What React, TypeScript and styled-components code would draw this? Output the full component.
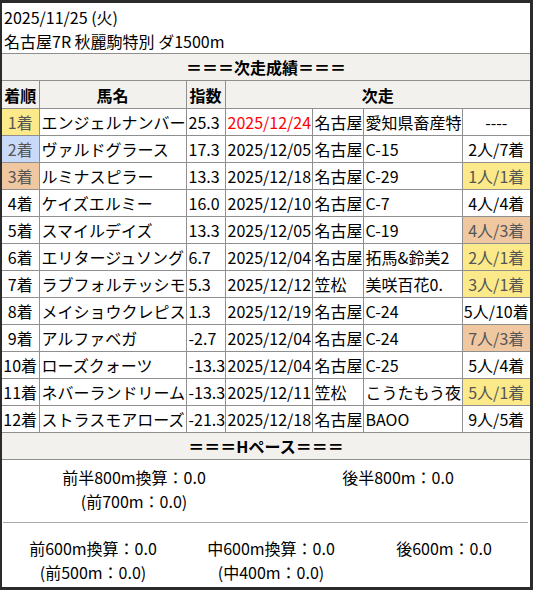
import React from 'react';
import styled, { createGlobalStyle, css } from 'styled-components';

const GlobalStyle = createGlobalStyle`
  html, body { margin: 0; padding: 0; background: #fff; }
  body { font-family: "Noto Sans CJK JP", "Noto Sans", sans-serif; color: #000; }
`;

const line = '#8f8f8f';

type Tone = 'gold' | 'silver' | 'bronze' | undefined;

const toneBg: Record<string, string> = {
  gold: '#fbe98a',
  silver: '#c9daf8',
  bronze: '#efc8a2',
};

const Frame = styled.div`
  box-sizing: border-box;
  width: 533px;
  height: 590px;
  border: 3px solid #2b2b2b;
  border-left-width: 2px;
  background: #fff;
  font-size: 16px;
  display: flex;
  flex-direction: column;
`;

const Header = styled.div`
  padding: 2px 2px 0;
  line-height: 24px;
`;

const Band = styled.div`
  height: 26px;
  line-height: 26px;
  border-top: 1px solid ${line};
  border-bottom: 1px solid ${line};
  background: #f2f1ed;
  font-weight: bold;
  text-align: center;
`;

const Table = styled.table`
  width: 528px;
  border-collapse: collapse;
  border-style: hidden;
  table-layout: fixed;
`;

const Th = styled.th`
  height: 27px;
  padding: 0;
  border: 1px solid ${line};
  background: #f2f1ed;
  font-weight: bold;
  text-align: center;
  line-height: 26px;
`;

const Td = styled.td<{ $align?: 'left' | 'center'; $tone?: Tone; $red?: boolean }>`
  height: 26px;
  padding: 0 0 0 2px;
  border: 1px solid ${line};
  line-height: 26px;
  white-space: nowrap;
  overflow: hidden;
  text-align: ${p => p.$align || 'left'};
  ${p => p.$align === 'center' && css`padding: 0;`}
  ${p =>
    p.$tone &&
    css`
      background: ${toneBg[p.$tone]};
      color: #555;
    `}
  ${p => p.$red && css`color: #ff0000;`}
`;

const Pace = styled.div`
  flex: 1;
  display: flex;
  flex-direction: column;
`;

const PaceRow = styled.div<{ $cols: string; $top: number; $bottom: number }>`
  display: grid;
  grid-template-columns: ${p => p.$cols};
  padding: ${p => p.$top}px 0 ${p => p.$bottom}px;
  line-height: 24px;
  text-align: center;
`;

const PaceCell = styled.div`
  display: flex;
  flex-direction: column;
  align-items: center;
  white-space: nowrap;
`;

const Divider = styled.div`
  height: 1px;
  margin: 0 2px 0 1px;
  background: #aaa;
`;

type Row = {
  pos: string;
  posTone?: Tone;
  name: string;
  idx: string;
  date: string;
  red?: boolean;
  place: string;
  race: string;
  res: string;
  resTone?: Tone;
};

const rows: Row[] = [
  { pos: '1着', posTone: 'gold', name: 'エンジェルナンバー', idx: '25.3', date: '2025/12/24', red: true, place: '名古屋', race: '愛知県畜産特', res: '----' },
  { pos: '2着', posTone: 'silver', name: 'ヴァルドグラース', idx: '17.3', date: '2025/12/05', place: '名古屋', race: 'C-15', res: '2人/7着' },
  { pos: '3着', posTone: 'bronze', name: 'ルミナスピラー', idx: '13.3', date: '2025/12/18', place: '名古屋', race: 'C-29', res: '1人/1着', resTone: 'gold' },
  { pos: '4着', name: 'ケイズエルミー', idx: '16.0', date: '2025/12/10', place: '名古屋', race: 'C-7', res: '4人/4着' },
  { pos: '5着', name: 'スマイルデイズ', idx: '13.3', date: '2025/12/05', place: '名古屋', race: 'C-19', res: '4人/3着', resTone: 'bronze' },
  { pos: '6着', name: 'エリタージュソング', idx: '6.7', date: '2025/12/04', place: '名古屋', race: '拓馬&鈴美2', res: '2人/1着', resTone: 'gold' },
  { pos: '7着', name: 'ラブフォルテッシモ', idx: '5.3', date: '2025/12/12', place: '笠松', race: '美咲百花0.', res: '3人/1着', resTone: 'gold' },
  { pos: '8着', name: 'メイショウクレピス', idx: '1.3', date: '2025/12/19', place: '名古屋', race: 'C-24', res: '5人/10着' },
  { pos: '9着', name: 'アルファベガ', idx: '-2.7', date: '2025/12/04', place: '名古屋', race: 'C-24', res: '7人/3着', resTone: 'bronze' },
  { pos: '10着', name: 'ローズクォーツ', idx: '-13.3', date: '2025/12/04', place: '名古屋', race: 'C-25', res: '5人/4着' },
  { pos: '11着', name: 'ネバーランドリーム', idx: '-13.3', date: '2025/12/11', place: '笠松', race: 'こうたもう夜', res: '5人/1着', resTone: 'gold' },
  { pos: '12着', name: 'ストラスモアローズ', idx: '-21.3', date: '2025/12/18', place: '名古屋', race: 'BAOO', res: '9人/5着' },
];

export default function App() {
  return (
    <>
      <GlobalStyle />
      <Frame>
        <Header>
          <div>2025/11/25 (火)</div>
          <div>名古屋7R 秋麗駒特別 ダ1500m</div>
        </Header>
        <Band>＝＝＝次走成績＝＝＝</Band>
        <Table>
          <colgroup>
            <col style={{ width: 37 }} />
            <col style={{ width: 147 }} />
            <col style={{ width: 39 }} />
            <col style={{ width: 87 }} />
            <col style={{ width: 51 }} />
            <col style={{ width: 99 }} />
            <col style={{ width: 68 }} />
          </colgroup>
          <thead>
            <tr>
              <Th>着順</Th>
              <Th>馬名</Th>
              <Th>指数</Th>
              <Th colSpan={4}>次走</Th>
            </tr>
          </thead>
          <tbody>
            {rows.map(r => (
              <tr key={r.pos}>
                <Td $align="center" $tone={r.posTone}>{r.pos}</Td>
                <Td>{r.name}</Td>
                <Td>{r.idx}</Td>
                <Td $red={r.red}>{r.date}</Td>
                <Td>{r.place}</Td>
                <Td>{r.race}</Td>
                <Td $align="center" $tone={r.resTone}>{r.res}</Td>
              </tr>
            ))}
          </tbody>
        </Table>
        <Band>＝＝＝Hペース＝＝＝</Band>
        <Pace>
          <PaceRow $cols="1fr 1fr" $top={5} $bottom={9}>
            <PaceCell>
              <span>前半800m換算：0.0</span>
              <span>(前700m：0.0)</span>
            </PaceCell>
            <PaceCell>
              <span>後半800m：0.0</span>
            </PaceCell>
          </PaceRow>
          <Divider />
          <PaceRow $cols="182px 174px 1fr" $top={13} $bottom={3}>
            <PaceCell>
              <span>前600m換算：0.0</span>
              <span>(前500m：0.0)</span>
            </PaceCell>
            <PaceCell>
              <span>中600m換算：0.0</span>
              <span>(中400m：0.0)</span>
            </PaceCell>
            <PaceCell>
              <span>後600m：0.0</span>
            </PaceCell>
          </PaceRow>
        </Pace>
      </Frame>
    </>
  );
}
